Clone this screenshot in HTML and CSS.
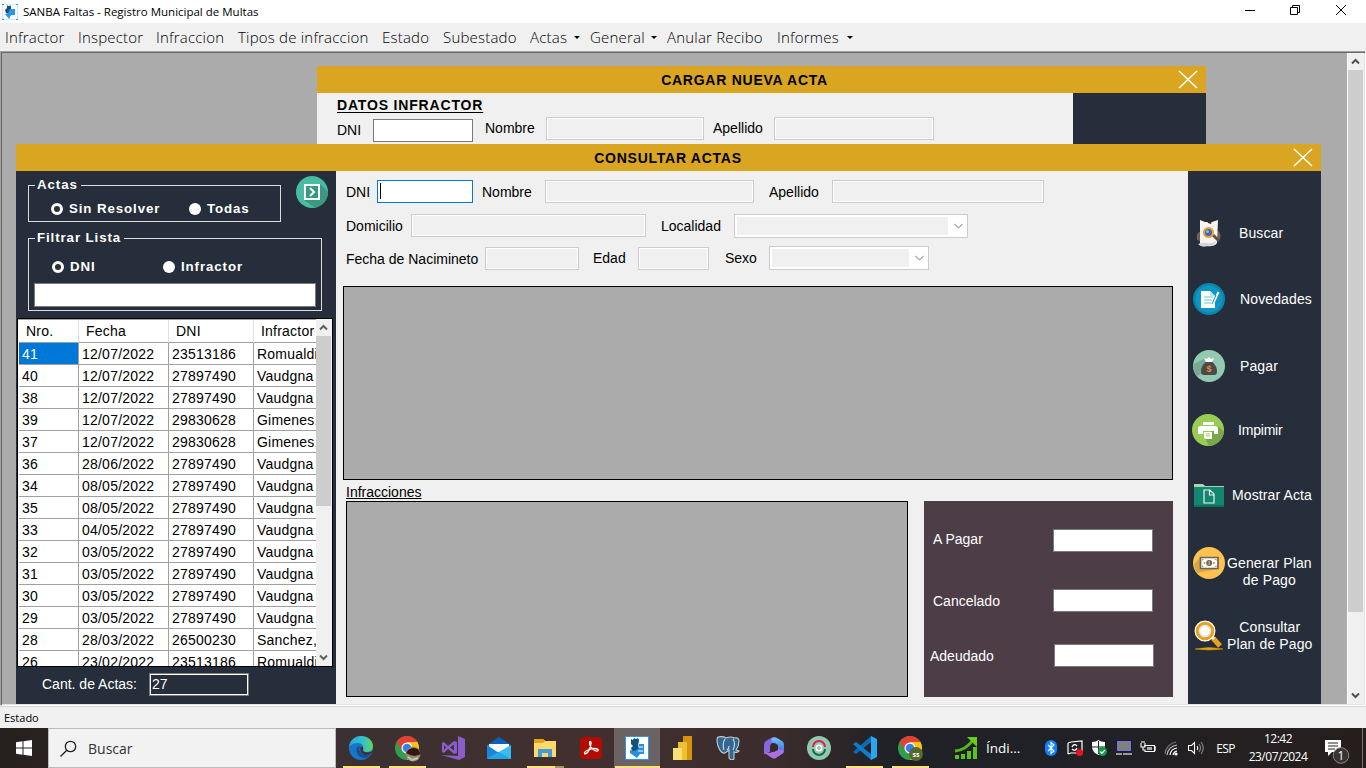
FILE: index.html
```html
<!DOCTYPE html>
<html lang="es">
<head>
<meta charset="utf-8">
<title>SANBA Faltas - Registro Municipal de Multas</title>
<link rel="stylesheet" href="styles.css">
</head>
<body>
<div class="app">
  <header class="titlebar">
    <svg class="app-icon" width="16" height="16" viewBox="0 0 16 16"><rect x=".5" y=".5" width="15" height="15" fill="#fff" stroke="#d3ebfb"/><path d="M0 0h2v1H0zM14 0h2v1h-2zM0 15h2v1H0zM14 15h2v1h-2z" fill="#2a98ea"/><path d="M5 1l1 1h2l1-1v4l3 1-2 3H4L3 6l2-2z" fill="#17507f"/><path d="M8 5h5v6H9l-2 4-4-5 3-1z" fill="#2a98ea"/></svg>
    <span class="app-title">SANBA Faltas - Registro Municipal de Multas</span>
    <svg class="caption" width="104" height="12" viewBox="0 0 104 12" fill="none" stroke="#000"><path d="M0 6.500h10M45.500 3.500h7v7h-7zM47.500 3V1.500h7v7H53M91 1l10 10M101 1L91 11"/></svg>
  </header>
  <nav class="menu">
    <span class="m1">Infractor</span><span class="m2">Inspector</span><span class="m3">Infraccion</span><span class="m4">Tipos de infraccion</span><span class="m5">Estado</span><span class="m6">Subestado</span><span class="m7">Actas<i class="drop"></i></span><span class="m8">General<i class="drop"></i></span><span class="m9">Anular Recibo</span><span class="m10">Informes<i class="drop"></i></span>
  </nav>

  <main class="mdi">
    <section class="window back">
      <div class="window-title">CARGAR NUEVA ACTA
        <svg class="close" width="20" height="20" viewBox="0 0 20 20"><path d="M1 1l18 17M19 1L1 18" stroke="#fff" stroke-width="1.500"/></svg>
      </div>
      <div class="back-body">
        <div class="back-form">
          <h2>DATOS INFRACTOR</h2>
          <div class="back-row"><label class="low">DNI</label><i class="box live"></i><label>Nombre</label><i class="box"></i><label>Apellido</label><i class="box"></i></div>
        </div>
        <div class="back-side"></div>
      </div>
    </section>

    <section class="window front">
      <div class="window-title">CONSULTAR ACTAS
        <svg class="close" width="20" height="20" viewBox="0 0 20 20"><path d="M1 1l18 17M19 1L1 18" stroke="#fff" stroke-width="1.500"/></svg>
      </div>
      <div class="front-body">
        <aside class="left">
          <div class="left-top">
            <fieldset class="group g-actas"><legend>Actas</legend>
              <div class="radios"><label class="radio on">Sin Resolver</label><label class="radio">Todas</label></div>
            </fieldset>
            <svg width="32" height="32" viewBox="0 0 32 32"><circle cx="16" cy="16" r="16" fill="#47bca0"/><path d="M24 8l8 8a16 16 0 0 1-13 15.700L8 24z" fill="#3b9780"/><path d="M9 9h14v14H9z" fill="#3b9780" stroke="#fff" stroke-width="2"/><path d="M14 12l4 4-4 4" fill="none" stroke="#fff" stroke-width="2"/></svg>
          </div>
          <fieldset class="group g-filter"><legend>Filtrar Lista</legend>
            <div class="radios"><label class="radio on">DNI</label><label class="radio">Infractor</label></div>
            <div class="filter-input"></div>
          </fieldset>
          <div class="grid">
            <div class="rows">
              <div class="row head"><b>Nro.</b><b>Fecha</b><b>DNI</b><b>Infractor</b></div>
              <div class="row"><b class="sel">41</b><b>12/07/2022</b><b>23513186</b><b>Romualdi</b></div>
              <div class="row"><b>40</b><b>12/07/2022</b><b>27897490</b><b>Vaudgna</b></div>
              <div class="row"><b>38</b><b>12/07/2022</b><b>27897490</b><b>Vaudgna</b></div>
              <div class="row"><b>39</b><b>12/07/2022</b><b>29830628</b><b>Gimenes,</b></div>
              <div class="row"><b>37</b><b>12/07/2022</b><b>29830628</b><b>Gimenes,</b></div>
              <div class="row"><b>36</b><b>28/06/2022</b><b>27897490</b><b>Vaudgna</b></div>
              <div class="row"><b>34</b><b>08/05/2022</b><b>27897490</b><b>Vaudgna</b></div>
              <div class="row"><b>35</b><b>08/05/2022</b><b>27897490</b><b>Vaudgna</b></div>
              <div class="row"><b>33</b><b>04/05/2022</b><b>27897490</b><b>Vaudgna</b></div>
              <div class="row"><b>32</b><b>03/05/2022</b><b>27897490</b><b>Vaudgna</b></div>
              <div class="row"><b>31</b><b>03/05/2022</b><b>27897490</b><b>Vaudgna</b></div>
              <div class="row"><b>30</b><b>03/05/2022</b><b>27897490</b><b>Vaudgna</b></div>
              <div class="row"><b>29</b><b>03/05/2022</b><b>27897490</b><b>Vaudgna</b></div>
              <div class="row"><b>28</b><b>28/03/2022</b><b>26500230</b><b>Sanchez,</b></div>
              <div class="row"><b>26</b><b>23/02/2022</b><b>23513186</b><b>Romualdi</b></div>
            </div>
            <div class="scroll">
              <svg width="15" height="17" viewBox="0 0 15 17"><path d="M4 10.500l3.500-3.500 3.500 3.500" fill="none" stroke="#606060" stroke-width="2"/></svg>
              <i class="thumb"></i>
              <svg width="15" height="17" viewBox="0 0 15 17"><path d="M4 6.500L7.500 10 11 6.500" fill="none" stroke="#606060" stroke-width="2"/></svg>
            </div>
          </div>
          <div class="count"><span>Cant. de Actas:</span><i>27</i></div>
        </aside>

        <div class="center">
          <div class="f-row r1"><label>DNI</label><i class="box focus"></i><label>Nombre</label><i class="box"></i><label>Apellido</label><i class="box"></i></div>
          <div class="f-row r2"><label>Domicilio</label><i class="box"></i><label>Localidad</label><i class="combo"><svg width="9" height="6" viewBox="0 0 9 6"><path d="M.5 1l4 4 4-4" fill="none" stroke="#aaa" stroke-width="1.200"/></svg></i></div>
          <div class="f-row r3"><label>Fecha de Nacimineto</label><i class="box"></i><label>Edad</label><i class="box"></i><label>Sexo</label><i class="combo"><svg width="9" height="6" viewBox="0 0 9 6"><path d="M.5 1l4 4 4-4" fill="none" stroke="#aaa" stroke-width="1.200"/></svg></i></div>
          <div class="pane top-pane"></div>
          <div class="infr">Infracciones</div>
          <div class="bottom">
            <div class="pane"></div>
            <div class="totals">
              <div class="t1"><span>A Pagar</span><i></i></div>
              <div class="t2"><span>Cancelado</span><i></i></div>
              <div class="t3"><span>Adeudado</span><i></i></div>
            </div>
          </div>
        </div>

        <aside class="right">
          <div class="act a1"><svg width="32" height="32" viewBox="0 0 32 32"><path d="M6 15Q3 17 4 23L12 26 13 16zM24 13q5 3 3 9l-6 3z" fill="#6d6258"/><path d="M7 3l5 2h7l6-2-1 23q-3 4-10 3L7 28z" fill="#f6f4f0"/><path d="M5 27q4-2 9-1 4 1 9-2-1 5-8 5-7 2-10-2z" fill="#d8d5d0"/><path d="M14 4l5 0-1 3-3-1z" fill="#3a2b26"/><path d="M20 18l6 6" stroke="#6b4a38" stroke-width="3"/><circle cx="15.500" cy="15.500" r="4.500" fill="#3c67c8" stroke="#eaa51c" stroke-width="2"/><circle cx="14.500" cy="14.500" r="1.500" fill="#8fb6f0"/></svg><span>Buscar</span></div>
          <div class="act a2"><svg width="32" height="32" viewBox="0 0 32 32"><circle cx="16" cy="16" r="16" fill="#0b84ae"/><circle cx="16" cy="16" r="13.500" fill="#0f96c2"/><path d="M8 8h9l5 5v12H8z" fill="#fff"/><path d="M17 8v5h5" fill="#bfe3ef"/><path d="M11 14h9M11 17h8M11 20h7" stroke="#6fc0da"/><path d="M25.500 9L20 21l-1 3" stroke="#fff" stroke-width="2" fill="none"/><path d="M23 12l-4 9" stroke="#0f96c2" stroke-width="1"/></svg><span>Novedades</span></div>
          <div class="act a3"><svg width="32" height="32" viewBox="0 0 32 32"><circle cx="16" cy="16" r="16" fill="#93c9b1"/><path d="M13 8L.500 14A16 16 0 0 0 4 26l4-2z" fill="#7ba896"/><path d="M14 11h4c3 2 6 6 6 10 0 3-1 4-3 4H11c-2 0-3-1-3-4 0-4 3-8 6-10z" fill="#4b4a4a"/><path d="M11 8l3 1 2-2 2 2 3-1-2 4h-6z" fill="#fff"/><text x="16" y="21.500" text-anchor="middle" class="coin">$</text></svg><span>Pagar</span></div>
          <div class="act a4"><svg width="32" height="32" viewBox="0 0 32 32"><circle cx="16" cy="16" r="16" fill="#99cc57"/><path d="M25 11l7 7A16 16 0 0 1 17 32l-4-8z" fill="#7ba647"/><path d="M11 8h11v3H11zM9 12h15q2 0 2 2v6h-4v-3H11v3H6v-6q0-2 3-2z" fill="#fff"/><path d="M12 18h8v7h-6l-2-1z" fill="#fff"/><path d="M14 20h4M14 22h4" stroke="#99cc57"/></svg><span>Impimir</span></div>
          <div class="act a5"><svg width="32" height="32" viewBox="0 0 32 32"><path d="M1 8V5h9l2 2h19v6H1z" fill="#a8d5b5"/><path d="M1 8h30v20H1z" fill="#13866f"/><path d="M1 26h30v2H1z" fill="#0d705d"/><path d="M11 11h6l4 4v9H11zM16.500 11v5H21" fill="none" stroke="#e8f5ee" stroke-width="1.200"/></svg><span>Mostrar Acta</span></div>
          <div class="act a6"><svg width="32" height="32" viewBox="0 0 32 32"><circle cx="16" cy="16" r="16" fill="#ffc24f"/><path d="M7 11L1 17a16 16 0 0 0 3 9l21-4z" fill="#d8a648"/><path d="M7.500 10.500h17.500v11H7.500z" fill="#fff" stroke="#67645f" stroke-width="1.700"/><path d="M9 12h2l-2 2zM23.500 12h-2l2 2zM9 20h2l-2-2zM23.500 20h-2l2-2z" fill="#d59330"/><circle cx="16.200" cy="16" r="3" fill="#666"/><circle cx="11.500" cy="16" r="1" fill="#d59330"/><circle cx="21" cy="16" r="1" fill="#d59330"/><path d="M16.200 14v4" stroke="#ffc24f"/></svg><span>Generar Plan<br>de Pago</span></div>
          <div class="act a7"><svg width="32" height="32" viewBox="0 0 32 32"><path d="M2 30q14-3 28 0-14 2-28 0z" fill="#e9a713" stroke="#c98a0e" stroke-width=".6"/><path d="M20 19l7 8" stroke="#e4a31a" stroke-width="5"/><path d="M18 17l3 3" stroke="#eee" stroke-width="3"/><circle cx="12" cy="12" r="9" fill="#e4e4ec" stroke="#fff" stroke-width="3"/><circle cx="12" cy="12" r="7.800" fill="none" stroke="#e4a31a" stroke-width="3"/><circle cx="12" cy="12" r="4.500" fill="#fff"/></svg><span>Consultar<br>Plan de Pago</span></div>
        </aside>
      </div>
    </section>

    <div class="scroll main-scroll">
      <svg width="15" height="17" viewBox="0 0 15 17"><path d="M4 10.500l3.500-3.500 3.500 3.500" fill="none" stroke="#505050" stroke-width="2"/></svg>
      <i class="thumb"></i>
      <svg width="15" height="17" viewBox="0 0 15 17"><path d="M4 6.500L7.500 10 11 6.500" fill="none" stroke="#505050" stroke-width="2"/></svg>
    </div>
  </main>

  <footer class="status">Estado</footer>

  <div class="taskbar">
    <div class="start"><svg width="16" height="16" viewBox="0 0 16 16"><path d="M0 2.300l6.500-1v6.200H0zM7.500 1.200L16 0v7.500H7.500zM0 8.500h6.500v6.200L0 13.700zM7.500 8.500H16V16l-8.500-1.200z" fill="#fff"/></svg></div>
    <div class="search"><svg width="17" height="17" viewBox="0 0 17 17" fill="none" stroke="#222" stroke-width="1.300"><circle cx="10.500" cy="6.500" r="5.200"/><path d="M6.800 10.200L.5 16.500"/></svg>Buscar</div>
    <div class="apps">
      <div class="slot run"><svg width="24" height="24" viewBox="0 0 24 24"><defs><linearGradient id="eg"><stop offset="0" stop-color="#2aa7dc"/><stop offset=".6" stop-color="#35c1c9"/><stop offset="1" stop-color="#62d657"/></linearGradient></defs><circle cx="12" cy="12" r="12" fill="#1677c9"/><path d="M0 11C1 4 6 0 12 0c8 0 12 6 12 10 0 5-4 6-7 6-3 0-4-1-3-3 1-3-1-6-5-6C5 7 2 8 0 11z" fill="url(#eg)"/><path d="M8 11c-2 4 0 10 7 11 3 0 6-2 7-4-4 2-8 1-10-1-2-2-2-4-1-7z" fill="#174f92"/><path d="M11.500 11c-1 4 1 7 5 8 3 0 6-2 7.500-3V15c-3 2-10 2-10-1 1-2 0-4-2.500-3z" fill="#40302f"/></svg></div>
      <div class="slot run"><svg class="badged" width="26" height="26" viewBox="0 0 26 26"><circle cx="12" cy="12" r="12" fill="#2f9e4c"/><path d="M1.600 6A12 12 0 0 1 22.400 6H12L7 14z" fill="#e34133"/><path d="M12 24A12 12 0 0 0 22.400 6H12l5 9z" fill="#fbc116"/><circle cx="12" cy="12" r="5.500" fill="#fff"/><circle cx="12" cy="12" r="4.300" fill="#3b7ded"/><circle cx="18" cy="18" r="7.500" fill="#8f8b72"/><path d="M11 17q4-7 12-4l3 5-6 2-5-1z" fill="#33190f"/><path d="M13 21l4 3 6-2" stroke="#c6c4b0" stroke-width="2" fill="none"/></svg></div>
      <div class="slot"><svg width="24" height="24" viewBox="0 0 24 24"><path d="M17 0l7 3v18l-6 3-18-5 17 1z" fill="#8a5dcb"/><path d="M1 7l2-1 4 4 6-5 3 1v11l-3 1-6-5-4 4-2-1zM3 9v5l2-2.500zM9 11.500l4 3V8.500z" fill="#8a5dcb" fill-rule="evenodd"/></svg></div>
      <div class="slot"><svg width="24" height="24" viewBox="0 0 24 24"><path d="M0 9L12 1l12 8v3H0z" fill="#0b61b4"/><path d="M2 8h20v8H2z" fill="#f7fbff"/><path d="M0 9l12 8L0 23z" fill="#1787dc"/><path d="M24 9v14H0z" fill="#3bbcf1"/><path d="M0 23l12-7 12 7z" fill="#26a4e8"/></svg></div>
      <div class="slot run wide"><svg width="22" height="20" viewBox="0 0 22 20"><path d="M0 1h9l2 2h11v16H0z" fill="#ffd96a"/><path d="M0 1h9l2 2-2 2H0z" fill="#e5a317"/><path d="M4 19v-8h14v8h-4v-4H8v4z" fill="#419bde"/></svg></div>
      <div class="slot"><svg width="22" height="22" viewBox="0 0 22 22"><rect width="22" height="22" rx="4" fill="#b30b00"/><path d="M5 17c3 0 6-7 6-11 0-2-1.500-2-1.500 0 0 4 5 9 8 8 2-1 0-2.500-3-2.500-4 0-9 2-10 4 0 1 0 1.500.5 1.500z" fill="none" stroke="#fff" stroke-width="1.300"/></svg></div>
      <div class="slot run active"><svg width="24" height="24" viewBox="0 0 24 24"><rect x=".5" y=".5" width="23" height="23" fill="#fff" stroke="#2a98ea"/><path d="M6 3l2 1 1-2 2 1 2-1 1 2-1 6 1 3-3 3-4-1-1-3 2-2-2-2z" fill="#16507f"/><path d="M5 14l4 1 4-2 1-5h5v10h-4l-3 4-7-5z" fill="#2590e0"/><path d="M14 11h4M13 15h5" stroke="#fff"/></svg></div>
      <div class="slot s"><svg width="20" height="24" viewBox="0 0 20 24"><path d="M10 0h9v24h-9z" fill="#d8930e"/><path d="M5 6h9v18H5z" fill="#efc02f"/><path d="M0 12h9v12H0z" fill="#fbe076"/></svg></div>
      <div class="slot s"><svg width="24" height="24" viewBox="0 0 24 24"><path d="M2 1q5-1 8 1 5-2 8 0 5-1 5 3 0 5-3 9l3 1q-2 2-5 1v7q-3 2-5-1v-8l-4 3Q5 18 2 10 0 3 2 1z" fill="#336791" stroke="#c3ced7" stroke-width="1.100"/><path d="M9 3Q6 8 8 14M17 3q3 5 0 11M11 14q2-1 2-4" fill="none" stroke="#d5dde3" stroke-width="1.100"/></svg></div>
      <div class="slot s"><svg width="22" height="24" viewBox="0 0 22 24"><defs><linearGradient id="mb" x2="0" y2="1"><stop offset="0" stop-color="#6cc5fa"/><stop offset="1" stop-color="#3c62d9"/></linearGradient></defs><path d="M8 2q3-2 6 0l-5 5q-2 1-2 4v5l-6 2V9q0-3 2-4z" fill="#8468dc"/><path d="M9 2q2-1 5 0l5 3q2 1 2 4v6q0 2-2 3l-4-3V9L8 6z" fill="url(#mb)"/><path d="M1 14q1 3 5 3 2 0 5-2l4-2 5 1q2 2-1 4l-6 4q-2 1-4 0l-6-4q-2-1-2-4z" fill="#ab6fe2"/><path d="M7 10l5-3 3 3v4l-4 2-4-1z" fill="#38292a"/></svg></div>
      <div class="slot s"><svg width="24" height="24" viewBox="0 0 24 24"><circle cx="12" cy="12" r="12" fill="#91c9b0"/><path d="M6 11a6 6 0 0 1 12 0" fill="none" stroke="#e21b50" stroke-width="2"/><path d="M6 13a6 6 0 0 0 12 0" fill="none" stroke="#176b49" stroke-width="2"/><circle cx="12" cy="12" r="3.500" fill="#fff"/><circle cx="12" cy="12" r="1.300" fill="none" stroke="#6a9d87"/></svg></div>
      <div class="slot s run"><svg width="24" height="24" viewBox="0 0 24 24"><path d="M18 0v6L3 18l-3-2z" fill="#0b6cb6"/><path d="M0 8l3-2 15 12v6z" fill="#0e7dcc"/><path d="M18 0l6 3v18l-6 3z" fill="#2ba6ef"/></svg></div>
      <div class="slot s run"><svg class="badged" width="26" height="26" viewBox="0 0 26 26"><circle cx="12" cy="12" r="12" fill="#2f9e4c"/><path d="M1.600 6A12 12 0 0 1 22.400 6H12L7 14z" fill="#e34133"/><path d="M12 24A12 12 0 0 0 22.400 6H12l5 9z" fill="#fbc116"/><circle cx="12" cy="12" r="5.500" fill="#fff"/><circle cx="12" cy="12" r="4.300" fill="#3b7ded"/><circle cx="18" cy="18" r="7" fill="#56682a"/><text x="18" y="20.500" text-anchor="middle" class="badge-text">ss</text></svg></div>
    </div>
    <div class="stock"><svg width="24" height="24" viewBox="0 0 24 24"><path d="M1 15Q12 14 19 4" fill="none" stroke="#55b91a" stroke-width="3"/><path d="M13 1h10v10z" fill="#67cf1b"/><path d="M1 19h4v4H1zM7 18h4v5H7zM13 15h4v8h-4zM19 11h4v12h-4z" fill="#5cc31a"/></svg><span>Índi...</span></div>
    <div class="tray">
      <svg viewBox="0 0 16 16"><rect x="2" width="12" height="16" rx="6" fill="#0a84ff"/><path d="M5 5l6 6-3 2.500v-11L11 5l-6 6" fill="none" stroke="#fff" stroke-width="1.100"/></svg>
      <svg viewBox="0 0 16 16"><path d="M1 3l3-1 11-1v12H4l-3 1M1 3v11" fill="none" stroke="#fff" stroke-width="1.200"/><path d="M5 7q2-4 5-1M10 8q-2 4-5 1" fill="none" stroke="#fff" stroke-width="1.300"/><circle cx="12.500" cy="12.500" r="3.500" fill="#e81123"/></svg>
      <svg viewBox="0 0 16 16"><path d="M7.500 0q2 2 6.500 2v5q0 5-6.500 8Q1 12 1 7V2q4.500 0 6.500-2z" fill="#fff"/><path d="M7.500 1v13M1 7h13" stroke="#222"/><circle cx="11.500" cy="11.500" r="4.500" fill="#149647"/><path d="M9.300 11.500l1.600 1.800 3-3.300" fill="none" stroke="#fff" stroke-width="1.200"/></svg>
      <svg viewBox="0 0 16 16"><path d="M.5.500h15v11H.500z" fill="#808080" stroke="#10108a"/><path d="M0 13h6v2H0zM7 13h9v2H7z" fill="#999"/></svg>
      <svg viewBox="0 0 16 16"><path d="M4 5.500h10.500v6H5V9.500M14.500 7H16v3h-1.500M1 3v4h4V3M2 1v2M4 1v2M3 7v3h2" fill="none" stroke="#fff" stroke-width="1.100"/><path d="M7 7h5v3H7z" fill="#aaa"/></svg>
      <svg viewBox="0 0 16 16" fill="none" stroke="#fff" stroke-width="1.200"><path d="M3 15A11 11 0 0 1 13 5" stroke="#bbb"/><path d="M6 15a8 8 0 0 1 7-7M9 15a5 5 0 0 1 4-4"/><path d="M1 14A13 13 0 0 1 12 2" stroke="#777"/><circle cx="12" cy="14" r="1" fill="#fff"/></svg>
      <svg viewBox="0 0 16 16" fill="none" stroke="#fff" stroke-width="1.100"><path d="M.5 5.500h3l3-3v11l-3-3h-3zM9 6q1.500 2 0 4"/><path d="M11 4q3 4 0 8M13 2q4.500 6 0 12" stroke="#888"/></svg>
      <span class="lang">ESP</span>
    </div>
    <div class="clock">12:42<br>23/07/2024</div>
    <svg class="notif" width="25" height="26" viewBox="0 0 25 26"><path d="M0 2h16v12h-9l-4 4v-4H0z" fill="#fff"/><path d="M3 5h10M3 8h10M3 11h7" stroke="#222"/><circle cx="16" cy="17.500" r="7.800" fill="#383433" stroke="#898584"/><text x="16" y="22" text-anchor="middle" class="notif-num">1</text></svg>
    <i class="peek"></i>
  </div>
</div>
</body>
</html>
```

FILE: styles.css
```css
*, *::before { box-sizing: border-box; }
body { margin: 0; width: 1366px; height: 768px; overflow: hidden; background: #f0f0f0; font-family: "Liberation Sans", Arial, sans-serif; font-size: 14px; color: #000; }
i, b { font-style: normal; font-weight: 400; }
svg { display: block; flex: none; }
.app { display: flex; flex-direction: column; width: 1366px; height: 768px; }

/* title bar and menu */
.titlebar { height: 23px; flex: none; display: flex; align-items: center; background: #fff; padding-left: 2px; font-family: "Open Sans", sans-serif; font-size: 11.5px; }
.app-title { margin-left: 5px; white-space: nowrap; }
.caption { margin-left: auto; margin-right: 17px; margin-top: -3px; }
.menu { height: 28px; flex: none; display: flex; align-items: center; padding-left: 5px; font-family: "Open Sans", sans-serif; font-size: 15px; font-weight: 300; letter-spacing: .2px; white-space: nowrap; }
.menu span { display: flex; align-items: center; flex: none; }
.m1 { width: 73px; } .m2 { width: 78px; } .m3 { width: 82px; } .m4 { width: 144px; } .m5 { width: 61px; }
.m6 { width: 87px; } .m7 { width: 60px; } .m8 { width: 77px; } .m9 { width: 110px; } .m10 { width: 80px; }
.drop { margin-left: auto; margin-right: 10px; border: 3px solid transparent; border-top-color: #000; border-bottom: 0; }
.m10 .drop { margin-right: 4px; }

/* MDI client area */
.mdi { height: 655px; flex: none; position: relative; background: #ababab; border-top: 1px solid #a0a0a0; border-left: 1px solid #a0a0a0; border-bottom: 1px solid #fff; border-right: 1px solid #fff; box-shadow: inset 1px 1px #696969, inset -1px -1px #e3e3e3; overflow: hidden; }
.window { position: absolute; }
.back { left: 316px; top: 14px; width: 889px; height: 90px; }
.front { left: 15px; top: 92px; width: 1305px; height: 560px; }
.window-title { height: 27px; background: #daa520; display: flex; align-items: center; justify-content: center; position: relative; letter-spacing: .75px; font-weight: 700; font-size: 14px; padding-top: 1px; }
.close { position: absolute; right: 8px; top: 4px; }
.front .window-title { padding-right: 1px; }
.back .window-title { padding-right: 34px; }
.back-body { display: flex; height: 63px; background: #f0f0f0; }
.back-form { flex: 1; padding-left: 20px; }
.back-side { width: 133px; background: #252e3a; }
h2 { margin: 4px 0 3px; font-size: 14px; line-height: 17px; letter-spacing: .83px; text-decoration: underline; text-underline-offset: 2px; font-weight: 700; }
.back-row { display: grid; grid-template-columns: 36px 100px 73px 158px 70px 160px; }
.back-row label { line-height: 23px; }
.back-row .low { line-height: 26px; }
.back-row .live { margin-top: 2px; }
.back-row label:nth-of-type(2) { padding-left: 12px; }
.back-row label:nth-of-type(3) { padding-left: 9px; }

/* inputs */
.box { display: block; height: 23px; background: #f0f0f0; border: 1px solid #ccc; box-shadow: inset 0 0 0 1px #fff; }
.live { background: #fff; border-color: #7a7a7a; }
.focus { background: #fff; border-color: #0078d7; padding: 2px 0 0 2px; }
.focus::before { content: ""; display: block; width: 1px; height: 16px; background: #000; }
.combo { display: flex; align-items: center; justify-content: flex-end; height: 24px; border: 1px solid #ccc; padding-right: 4px; background: linear-gradient(#f0f0f0, #f0f0f0) 2px 2px / calc(100% - 21px) calc(100% - 4px) no-repeat #fff; }

/* front window */
.front-body { display: flex; height: 533px; background: #f0f0f0; }
.left { width: 320px; background: #252e3a; display: flex; flex-direction: column; color: #fff; }
.left-top { display: flex; justify-content: space-between; padding: 5px 8px 0 12px; height: 57px; }
.group { margin: 0; padding: 0; border: 1px solid #dcdcdc; min-width: 0; color: #fff; font-weight: 700; font-size: 13.300px; letter-spacing: .9px; }
.group legend { padding: 0 3px 0 2px; margin-left: 6px; line-height: 18px; height: 18px; }
.g-actas { width: 253px; height: 46px; }
.radio { display: flex; align-items: center; height: 18px; line-height: 18px; }
.radio::before { content: ""; width: 12px; height: 12px; border-radius: 50%; background: #fff; margin-right: 6px; flex: none; }
.radio.on::before { background: #2f2f2f; border: 3px solid #fff; }
.g-filter { margin: 1px 14px 0 12px; height: 82px; }
.radios { display: flex; padding: 11px 0 0 23px; }
.radios .on { width: 111px; }
.g-actas .radios { padding: 6px 0 0 22px; }
.g-actas .radios .on { width: 138px; }
.filter-input { margin: 7px 5px 0; height: 24px; background: #fff; border: 1px solid #7a7a7a; }
.grid { margin: 7px 3px 0 1px; width: 316px; height: 349px; border: 1px solid #000; background: #fff; color: #000; display: flex; overflow: hidden; }
.rows { width: 298px; padding-left: 1px; overflow: hidden; border-top: 1px solid #a0a0a0; }
.row { display: grid; grid-template-columns: 60px 90px 85px 62px; height: 22px; }
.row b { border-right: 1px solid #a0a0a0; border-bottom: 1px solid #a0a0a0; padding-left: 3px; line-height: 22px; letter-spacing: .22px; overflow: hidden; white-space: nowrap; }
.row b:last-child { border-right: 0; }
.row.head { height: 23px; }
.row.head b { padding-left: 7px; line-height: 23px; border-right-color: #e0e0e0; }
.row .sel { background: #0078d7; color: #fff; }
.scroll { width: 16px; background: #f0f0f0; display: flex; flex-direction: column; padding-right: 1px; }
.scroll .thumb { display: block; background: #cdcdcd; height: 170px; margin-bottom: auto; }
.main-scroll { position: absolute; right: 1px; top: 1px; height: 651px; width: 17px; border-left: 1px solid #fff; padding: 0 1px 0 0; }
.main-scroll .thumb { height: 542px; }
.count { display: flex; align-items: center; padding: 0 0 3px 26px; height: 37px; }
.count span { width: 107px; }
.count i { width: 100px; height: 23px; border: 1px solid #7a7a7a; box-shadow: inset 0 0 0 1px #fff; padding: 0 2px; line-height: 20px; }

.center { width: 852px; padding: 9px 15px 0 7px; }
.f-row { display: grid; padding-left: 3px; align-items: start; }
.f-row label { line-height: 24px; white-space: nowrap; }
.r1 { grid-template-columns: 31px 96px 72px 209px 78px 212px; height: 34px; }
.r2 { grid-template-columns: 65px 235px 88px 234px; height: 32px; }
.r3 { grid-template-columns: 139px 94px 59px 71px 60px 160px; height: 40px; }
.r2 label { line-height: 25px; }
.r1 label:nth-of-type(2) { padding-left: 9px; }
.r1 label:nth-of-type(3), .r2 label:nth-of-type(2) { padding-left: 15px; }
.r3 .box { margin-top: 1px; }
.r3 label:nth-of-type(1) { line-height: 26px; }
.r3 label:nth-of-type(2) { padding-left: 14px; line-height: 25px; }
.r3 label:nth-of-type(3) { padding-left: 16px; line-height: 25px; }
.pane { background: #ababab; border: 1px solid #000; }
.top-pane { height: 194px; }
.infr { height: 21px; line-height: 25px; padding-left: 3px; text-decoration: underline; }
.bottom { display: flex; justify-content: space-between; height: 196px; padding-left: 3px; }
.bottom .pane { width: 562px; }
.totals { width: 249px; background: #4d3d47; color: #fff; padding: 26px 0 0 6px; }
.totals div { display: flex; align-items: center; height: 24px; }
.totals span { width: 123px; padding-left: 3px; }
.totals i { width: 100px; height: 23px; background: #fff; border: 1px solid #7a7a7a; }
.totals .t2 { margin-top: 37px; }
.totals .t3 { margin-top: 31px; }
.t1 i { margin-top: 3px; }
.t1 span { margin-top: -1px; }
.t2 span, .t3 span { margin-top: 2px; }
.totals .t3 span { padding-left: 0; width: 124px; }

.right { width: 133px; background: #252e3a; color: #fff; padding-top: 29px; display: grid; grid-template-rows: 66px 66px 68px 60px 70px 66px 78px; align-content: start; line-height: 17px; }
.act { display: flex; align-items: center; padding-left: 5px; white-space: nowrap; text-align: center; letter-spacing: .12px; }
.act span { margin-left: 14px; }
.a2 span, .a3 span { margin-left: 15px; }
.act.a4 { padding-left: 4px; letter-spacing: -.2px; }
.a5 span { margin-left: 7px; }
.a6 span { margin-left: 2px; margin-top: 18px; }
.a7 span { margin-left: 2px; margin-top: 2px; }
.coin { font: 700 9px "Liberation Sans", sans-serif; fill: #e88a3c; }

.status { height: 22px; flex: none; border-top: 1px solid #d7d7d7; font-family: "Open Sans", sans-serif; font-size: 11px; line-height: 22px; padding-left: 4px; }

/* taskbar */
.taskbar { height: 40px; display: flex; background: linear-gradient(90deg, #26201f 0, #3b3032 336px, #42302f 560px, #3b2c2d 780px, #202126 890px, #202126 1060px, #261e1d 1366px); color: #fff; font-family: "Open Sans", sans-serif; }
.start { width: 48px; display: flex; align-items: center; justify-content: center; }
.search { width: 288px; background: #f2f2f2; border: 1px solid #bdbdbd; color: #333; display: flex; align-items: center; gap: 11px; padding-left: 11px; font-size: 14px; }
.apps { display: flex; padding-left: 2px; width: 597px; }
.slot { width: 46px; display: flex; align-items: center; justify-content: center; flex: none; }
.slot.s { width: 45.500px; }
.badged { margin: 2px 0 0 2px; }
.run { background: linear-gradient(#ffe081, #ffe081) 50% 100% / 37px 2px no-repeat; }
.wide { background: linear-gradient(90deg, #ffe081 28px, #a99463 28px) 50% 100% / 37px 2px no-repeat; }
.active { background: linear-gradient(#ffe081, #ffe081) 50% 100% / 45px 2px no-repeat #6b6263; }
.stock { display: flex; align-items: center; width: 107px; padding-left: 21px; gap: 8px; font-size: 13.500px; }
.tray { display: flex; align-items: center; width: 205px; gap: 8.200px; padding-left: 3px; }
.tray svg { width: 16px; height: 16px; }
.lang { font-size: 12px; margin-left: 4px; letter-spacing: -.7px; }
.clock { width: 66px; text-align: center; font-size: 12px; line-height: 18px; padding-top: 2px; letter-spacing: -.5px; white-space: nowrap; }
.notif { margin: 10px 0 0 14px; }
.notif-num { font: 12px "Open Sans", sans-serif; fill: #fff; }
.badge-text { font: 700 7px "Open Sans", sans-serif; fill: #fff; }
.peek { border-left: 1px solid #777; margin-left: auto; width: 4px; }
```
